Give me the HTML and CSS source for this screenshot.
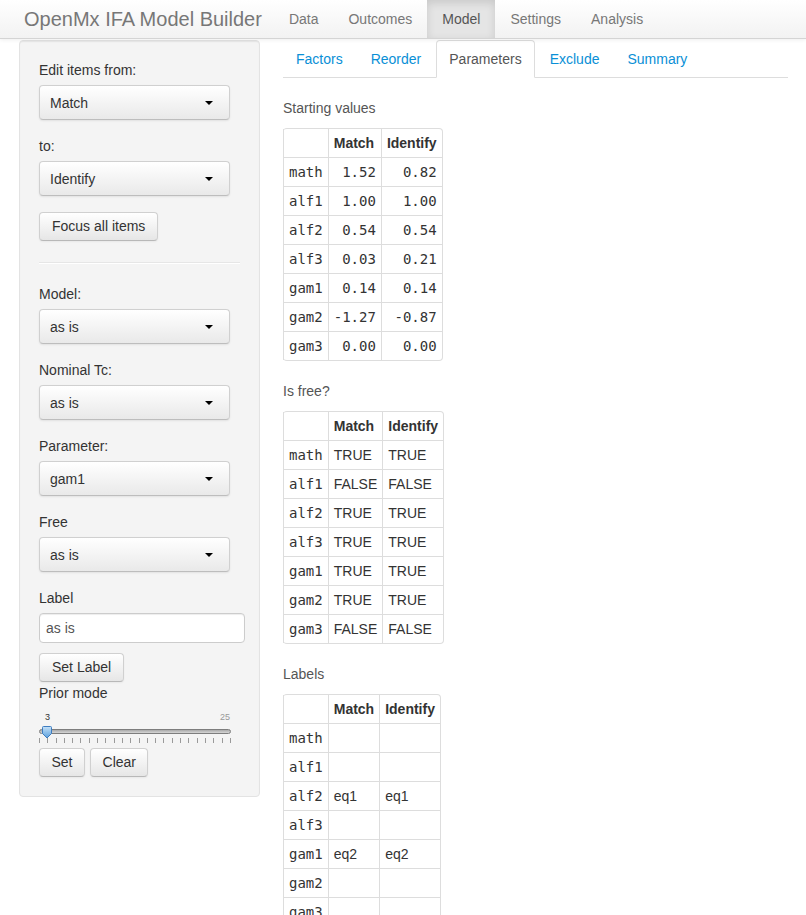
FILE: index.html
```html
<!DOCTYPE html>
<html>
<head>
<meta charset="utf-8">
<title>OpenMx IFA Model Builder</title>
<link rel="stylesheet" href="styles.css">
</head>
<body>
<header class="navbar">
  <span class="brand">OpenMx IFA Model Builder</span>
  <nav class="nav">
    <a class="nav-item">Data</a>
    <a class="nav-item">Outcomes</a>
    <a class="nav-item active">Model</a>
    <a class="nav-item">Settings</a>
    <a class="nav-item">Analysis</a>
  </nav>
</header>

<div class="page">
  <aside class="well">
    <label class="lbl">Edit items from:</label>
    <div class="select"><span>Match</span><i class="caret"></i></div>
    <label class="lbl">to:</label>
    <div class="select"><span>Identify</span><i class="caret"></i></div>
    <button class="btn">Focus all items</button>
    <hr class="sep">
    <label class="lbl">Model:</label>
    <div class="select"><span>as is</span><i class="caret"></i></div>
    <label class="lbl">Nominal Tc:</label>
    <div class="select"><span>as is</span><i class="caret"></i></div>
    <label class="lbl">Parameter:</label>
    <div class="select"><span>gam1</span><i class="caret"></i></div>
    <label class="lbl">Free</label>
    <div class="select"><span>as is</span><i class="caret"></i></div>
    <label class="lbl">Label</label>
    <input class="text-input" type="text" value="as is">
    <button class="btn">Set Label</button>
    <div class="lbl-plain">Prior mode</div>
    <div class="slider">
      <div class="irs-labels"><span class="irs-from">3</span><span class="irs-max">25</span></div>
      <div class="irs-track">
        <svg class="irs-handle" width="12" height="13" viewBox="0 0 12 13">
          <defs>
            <linearGradient id="hg" x1="0" y1="0" x2="0" y2="1">
              <stop offset="0" stop-color="#c4e1f8"/>
              <stop offset="1" stop-color="#5a9fdc"/>
            </linearGradient>
          </defs>
          <path d="M1.5 1.5 Q1.5 0.5 2.5 0.5 H9.5 Q10.5 0.5 10.5 1.5 V7.5 L6 12 L1.5 7.5 Z" fill="url(#hg)" stroke="#3f7cbf" stroke-width="1"/>
        </svg>
      </div>
      <div class="irs-grid">
        <i></i><i></i><i></i><i></i><i></i><i></i><i></i><i></i><i></i><i></i><i></i><i></i>
        <i></i><i></i><i></i><i></i><i></i><i></i><i></i><i></i><i></i><i></i><i></i><i></i>
      </div>
    </div>
    <div class="btn-row">
      <button class="btn">Set</button>
      <button class="btn">Clear</button>
    </div>
  </aside>

  <main class="main">
    <ul class="tabs">
      <li class="tab">Factors</li>
      <li class="tab">Reorder</li>
      <li class="tab active">Parameters</li>
      <li class="tab">Exclude</li>
      <li class="tab">Summary</li>
    </ul>

    <div class="section-title">Starting values</div>
    <table class="tbl">
      <thead><tr><th></th><th>Match</th><th>Identify</th></tr></thead>
      <tbody>
        <tr><td class="mono">math</td><td class="mono num">1.52</td><td class="mono num">0.82</td></tr>
        <tr><td class="mono">alf1</td><td class="mono num">1.00</td><td class="mono num">1.00</td></tr>
        <tr><td class="mono">alf2</td><td class="mono num">0.54</td><td class="mono num">0.54</td></tr>
        <tr><td class="mono">alf3</td><td class="mono num">0.03</td><td class="mono num">0.21</td></tr>
        <tr><td class="mono">gam1</td><td class="mono num">0.14</td><td class="mono num">0.14</td></tr>
        <tr><td class="mono">gam2</td><td class="mono num">-1.27</td><td class="mono num">-0.87</td></tr>
        <tr><td class="mono">gam3</td><td class="mono num">0.00</td><td class="mono num">0.00</td></tr>
      </tbody>
    </table>

    <div class="section-title">Is free?</div>
    <table class="tbl">
      <thead><tr><th></th><th>Match</th><th>Identify</th></tr></thead>
      <tbody>
        <tr><td class="mono">math</td><td>TRUE</td><td>TRUE</td></tr>
        <tr><td class="mono">alf1</td><td>FALSE</td><td>FALSE</td></tr>
        <tr><td class="mono">alf2</td><td>TRUE</td><td>TRUE</td></tr>
        <tr><td class="mono">alf3</td><td>TRUE</td><td>TRUE</td></tr>
        <tr><td class="mono">gam1</td><td>TRUE</td><td>TRUE</td></tr>
        <tr><td class="mono">gam2</td><td>TRUE</td><td>TRUE</td></tr>
        <tr><td class="mono">gam3</td><td>FALSE</td><td>FALSE</td></tr>
      </tbody>
    </table>

    <div class="section-title">Labels</div>
    <table class="tbl">
      <thead><tr><th></th><th>Match</th><th>Identify</th></tr></thead>
      <tbody>
        <tr><td class="mono">math</td><td></td><td></td></tr>
        <tr><td class="mono">alf1</td><td></td><td></td></tr>
        <tr><td class="mono">alf2</td><td>eq1</td><td>eq1</td></tr>
        <tr><td class="mono">alf3</td><td></td><td></td></tr>
        <tr><td class="mono">gam1</td><td>eq2</td><td>eq2</td></tr>
        <tr><td class="mono">gam2</td><td></td><td></td></tr>
        <tr><td class="mono">gam3</td><td></td><td></td></tr>
      </tbody>
    </table>
  </main>
</div>
</body>
</html>
```

FILE: styles.css
```css
* { box-sizing: border-box; }

body {
  margin: 0;
  font-family: "Liberation Sans", Arial, sans-serif;
  font-size: 14px;
  line-height: 20px;
  color: #333;
  background: #fff;
}

/* navbar */
.navbar {
  display: flex;
  align-items: stretch;
  height: 39px;
  background: linear-gradient(#ffffff, #f2f2f2);
  border-bottom: 1px solid #d4d4d4;
  box-shadow: 0 1px 4px rgba(0,0,0,0.07);
  position: relative;
  z-index: 2;
}
.brand {
  padding: 9px 12px 0 24px;
  font-size: 20px;
  line-height: 20px;
  color: #777;
}
.nav { display: flex; }
.nav-item {
  padding: 10px 15px 0;
  color: #777;
  font-size: 14px;
  line-height: 19px;
}
.nav-item.active {
  color: #555;
  background: #e5e5e5;
  box-shadow: inset 0 3px 8px rgba(0,0,0,0.125);
}

/* page */
.page {
  display: flex;
  align-items: flex-start;
  gap: 23px;
  padding: 1px 18px 0 19px;
}

.well {
  width: 241px;
  flex: none;
  background: #f4f4f4;
  border: 1px solid #e3e3e3;
  border-radius: 4px;
  padding: 19px;
  box-shadow: inset 0 1px 1px rgba(0,0,0,0.05);
  display: flex;
  flex-direction: column;
  align-items: flex-start;
}

.lbl {
  display: block;
  line-height: 20px;
  margin-bottom: 5px;
}
.lbl-plain { line-height: 20px; margin-top: 1px; }

.select {
  width: 191px;
  height: 35px;
  display: flex;
  align-items: center;
  justify-content: space-between;
  padding: 0 16px 0 10px;
  margin-bottom: 16px;
  border: 1px solid #d0d0d0;
  border-bottom-color: #bdbdbd;
  border-radius: 4px;
  background: linear-gradient(#ffffff, #e9e9e9);
  box-shadow: inset 0 1px 0 rgba(255,255,255,0.2), 0 1px 2px rgba(0,0,0,0.08);
  color: #333;
}
.caret {
  width: 0;
  height: 0;
  border-left: 4.5px solid transparent;
  border-right: 4.5px solid transparent;
  border-top: 4.5px solid #000;
  margin-top: 1px;
}

.btn {
  font-family: "Liberation Sans", Arial, sans-serif;
  font-size: 14px;
  line-height: 19px;
  padding: 4px 12px;
  color: #333;
  border: 1px solid #d0d0d0;
  border-bottom-color: #b8b8b8;
  border-radius: 4px;
  background: linear-gradient(#ffffff, #e6e6e6);
  box-shadow: inset 0 1px 0 rgba(255,255,255,0.2), 0 1px 2px rgba(0,0,0,0.05);
  cursor: pointer;
}

.sep {
  align-self: stretch;
  margin: 21px 0 20px;
  border: 0;
  border-top: 1px solid #e6e6e6;
  border-bottom: 1px solid #fff;
  height: 0;
}

.text-input {
  width: 206px;
  height: 30px;
  padding: 4px 6px;
  margin: 0 0 10px;
  font-family: "Liberation Sans", Arial, sans-serif;
  font-size: 14px;
  color: #555;
  background: #fff;
  border: 1px solid #ccc;
  border-radius: 4px;
  box-shadow: inset 0 1px 1px rgba(0,0,0,0.075);
}

/* slider */
.slider {
  width: 192px;
  padding-top: 8px;
}
.irs-labels {
  display: flex;
  justify-content: space-between;
  font-size: 9px;
  line-height: 12px;
  height: 12px;
}
.irs-from { color: #333; padding-left: 6px; }
.irs-max { color: #999; padding-right: 1px; }
.irs-track {
  position: relative;
  margin-top: 6px;
  height: 5px;
  border-radius: 3px;
  border: 1px solid #7d7d7d;
  background: linear-gradient(#a9a9a9, #d6d6d6);
}
.irs-handle {
  position: absolute;
  left: 1px;
  top: -4px;
}
.irs-grid {
  display: flex;
  justify-content: space-between;
  margin-top: 4px;
  height: 5px;
}
.irs-grid i {
  display: block;
  width: 1px;
  height: 5px;
  background: #9a9a9a;
}

.btn-row {
  display: flex;
  gap: 5px;
  margin-top: 5px;
}
.btn-row .btn { padding: 4px 11.5px; }

/* main */
.main {
  flex: 1;
  min-width: 0;
}
.tabs {
  list-style: none;
  margin: 0 0 20px;
  padding: 0;
  display: flex;
  border-bottom: 1px solid #ddd;
}
.tab {
  margin-right: 2px;
  margin-bottom: -1px;
  padding: 8px 12px;
  line-height: 20px;
  border: 1px solid transparent;
  border-radius: 4px 4px 0 0;
  color: #0a8fd6;
}
.tab.active {
  color: #555;
  background: #fff;
  border-color: #ddd #ddd transparent;
}

.section-title {
  color: #555;
  line-height: 20px;
  margin-bottom: 10px;
}

.tbl {
  border-collapse: separate;
  border-spacing: 0;
  border: 1px solid #ddd;
  border-left: 0;
  border-radius: 4px;
  margin-bottom: 20px;
}
.tbl th, .tbl td {
  padding: 4px 5px;
  line-height: 20px;
  text-align: left;
  vertical-align: top;
  border-left: 1px solid #ddd;
  border-top: 1px solid #ddd;
  height: 29px;
}
.tbl thead th { border-top: 0; height: 28px; }
.tbl th { font-weight: bold; }
.tbl .mono {
  font-family: "DejaVu Sans Mono", monospace;
  font-size: 14px;
}
.tbl .num { text-align: right; }
```
